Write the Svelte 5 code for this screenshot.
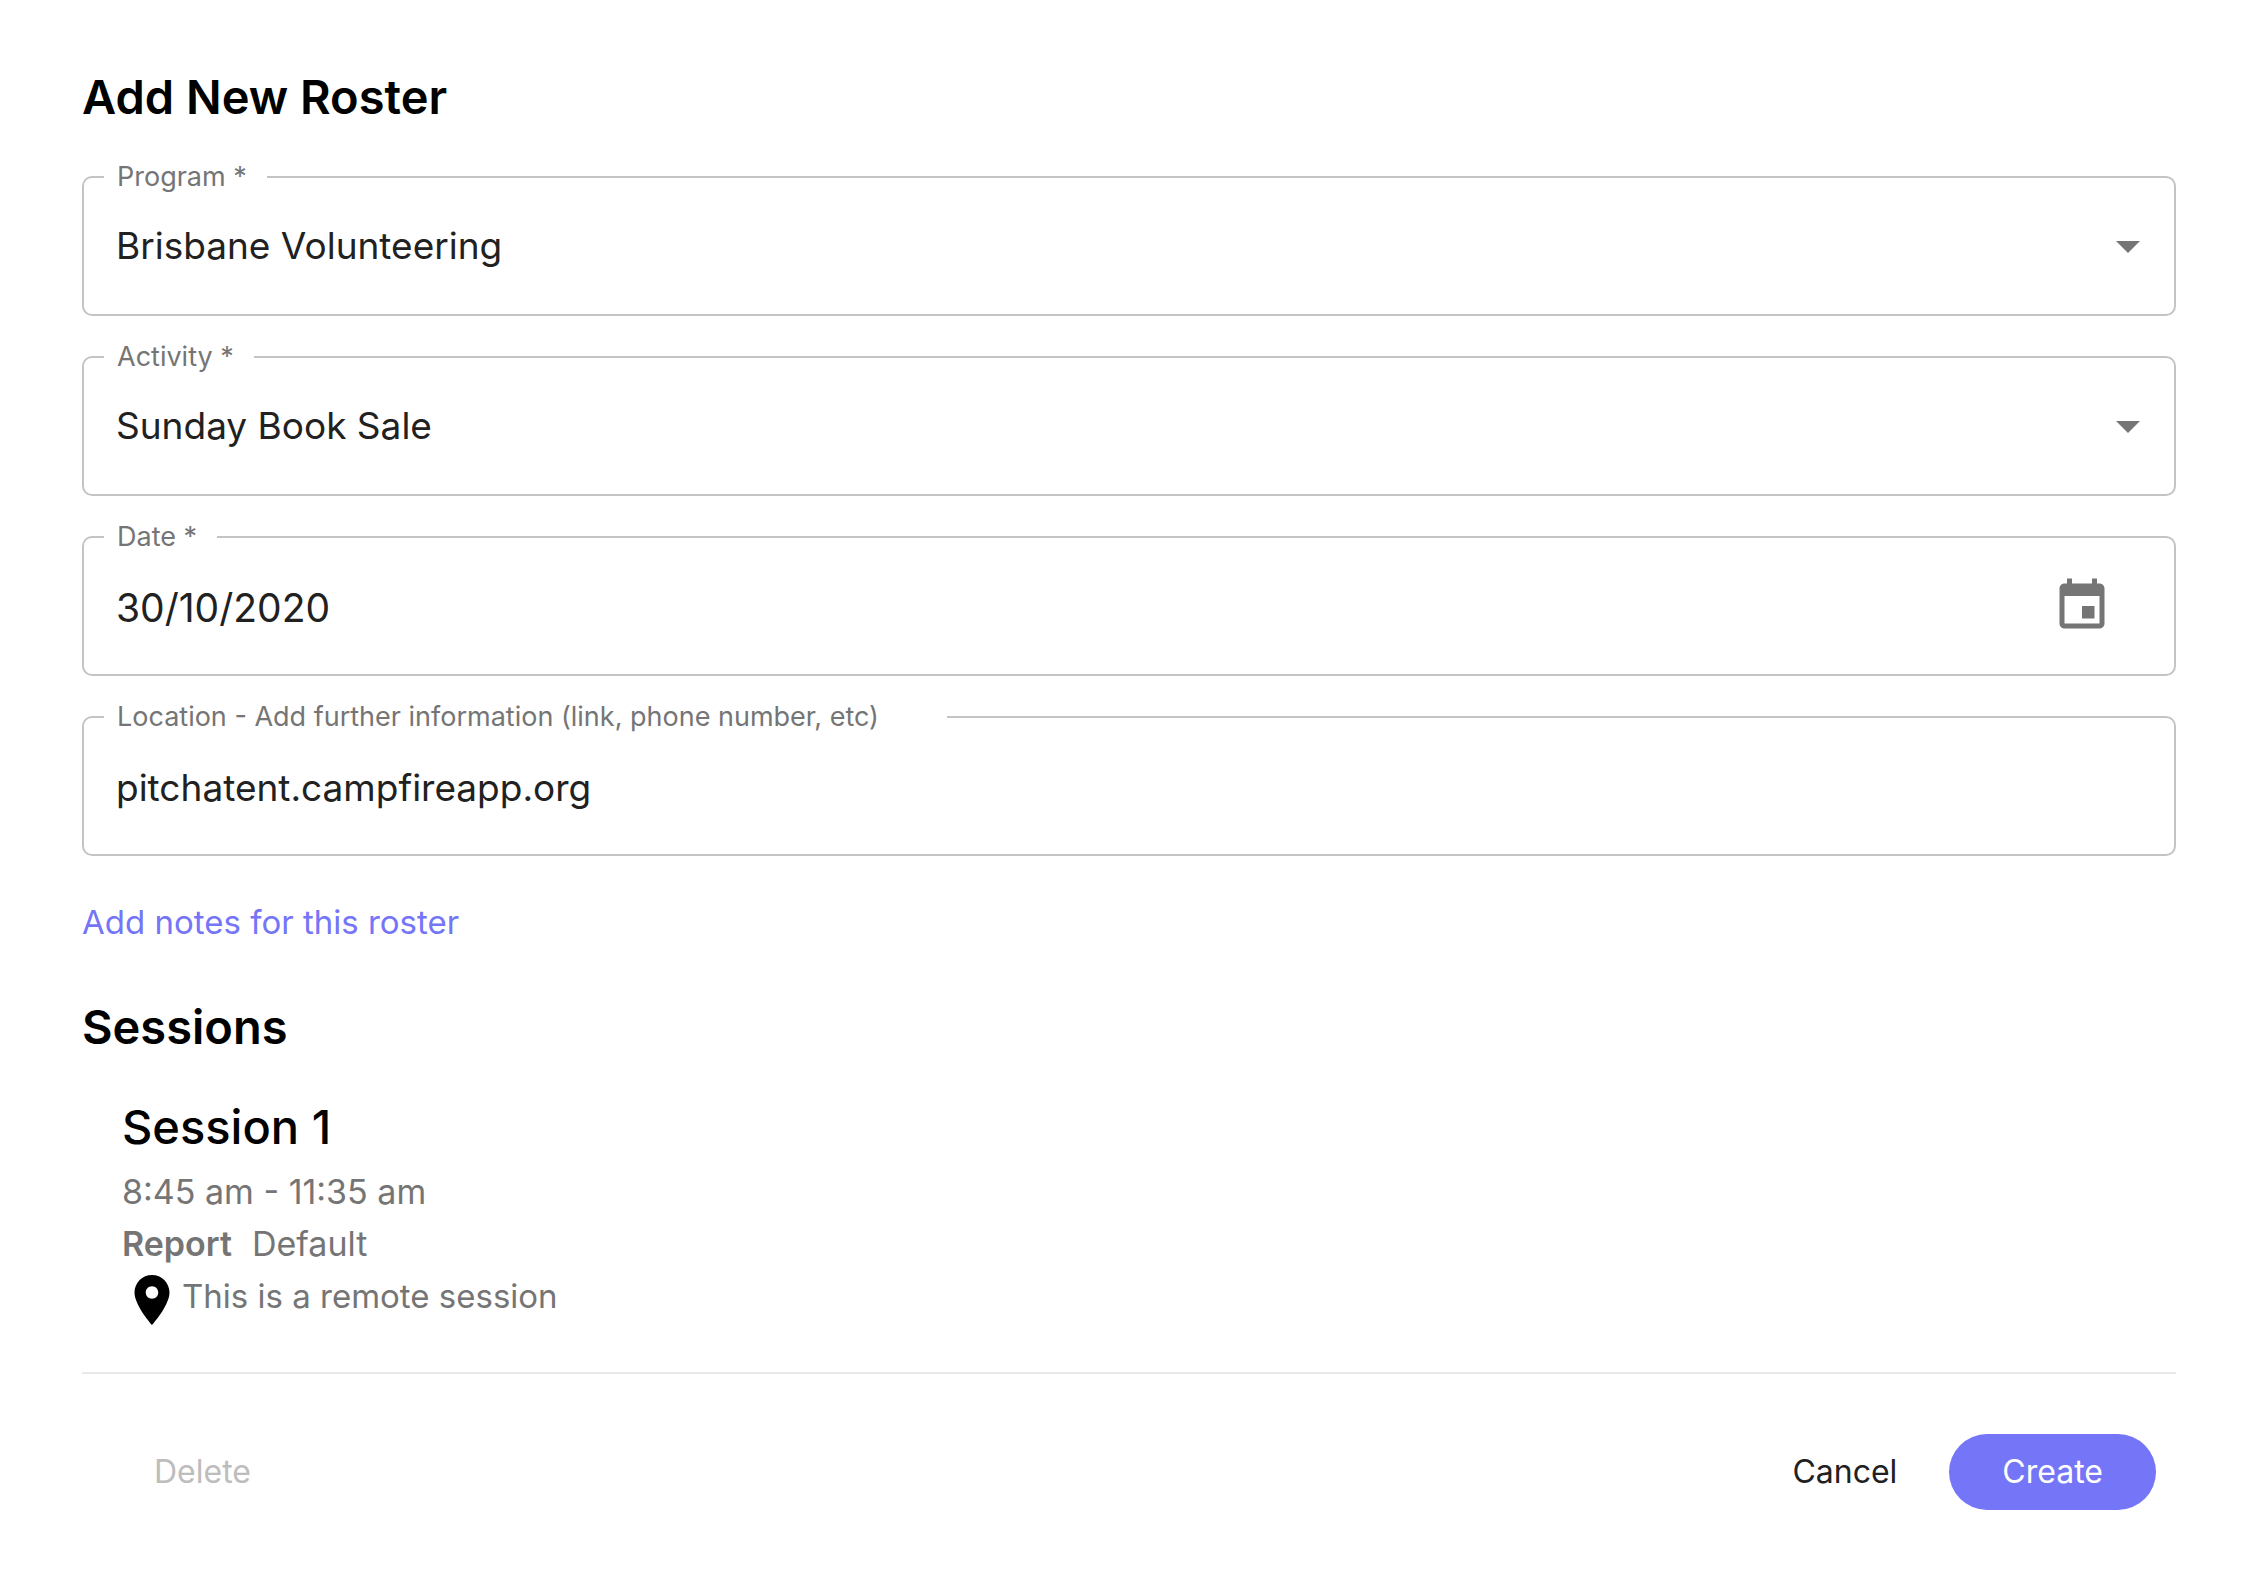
<script>
  let program = $state('Brisbane Volunteering');
  let activity = $state('Sunday Book Sale');
  let date = $state('30/10/2020');
  let location = $state('pitchatent.campfireapp.org');
</script>

<svelte:head>
  <title>Add New Roster</title>
</svelte:head>

<main>
  <form onsubmit={(e) => e.preventDefault()}>
    <h1>Add New Roster</h1>

    <div class="fields">
      <div class="field">
        <label for="program">Program *</label>
        <select id="program" bind:value={program} required>
          <option>Brisbane Volunteering</option>
        </select>
        <svg class="caret" viewBox="0 0 24 12" aria-hidden="true"><path d="M0 0h24L12 12z" /></svg>
      </div>

      <div class="field">
        <label for="activity">Activity *</label>
        <select id="activity" bind:value={activity} required>
          <option>Sunday Book Sale</option>
        </select>
        <svg class="caret" viewBox="0 0 24 12" aria-hidden="true"><path d="M0 0h24L12 12z" /></svg>
      </div>

      <div class="field typed">
        <label for="date">Date *</label>
        <input id="date" class="digits" type="text" bind:value={date} required />
        <button type="button" class="pick" aria-label="Choose date">
          <svg viewBox="0 0 24 24" aria-hidden="true">
            <path d="M17 12h-5v5h5v-5zM16 1v2H8V1H6v2H5c-1.11 0-1.99.9-1.99 2L3 19c0 1.1.89 2 2 2h14c1.1 0 2-.9 2-2V5c0-1.1-.9-2-2-2h-1V1h-2zm3 18H5V8h14v11z" />
          </svg>
        </button>
      </div>

      <div class="field typed">
        <label class="long" for="location">Location - Add further information (link, phone number, etc)</label>
        <input id="location" type="text" bind:value={location} />
      </div>
    </div>

    <a class="notes" href="#notes">Add notes for this roster</a>

    <h2>Sessions</h2>

    <section class="session">
      <h3>Session 1</h3>
      <p class="time">8:45 am - 11:35 am</p>
      <p class="report"><strong>Report</strong><span>Default</span></p>
      <p class="place">
        <svg viewBox="0 0 24 24" aria-hidden="true">
          <path d="M12 2C8.13 2 5 5.13 5 9c0 5.25 7 13 7 13s7-7.75 7-13c0-3.87-3.13-7-7-7zm0 9.5c-1.38 0-2.5-1.12-2.5-2.5s1.12-2.5 2.5-2.5 2.5 1.12 2.5 2.5-1.12 2.5-2.5 2.5z" />
        </svg>
        <span>This is a remote session</span>
      </p>
    </section>

    <footer>
      <button type="button" class="delete" disabled>Delete</button>
      <button type="button" class="cancel">Cancel</button>
      <button type="submit" class="create">Create</button>
    </footer>
  </form>
</main>

<style>
  :global(body) {
    background: #fff;
  }

  main {
    padding: 65px 92px 64px 82px;
    font-family: Inter, 'Liberation Sans', sans-serif;
    font-size: 33px;
    line-height: 52px;
    color: #757575;
  }

  form {
    display: flex;
    flex-direction: column;
  }

  h1,
  h2,
  h3,
  p {
    margin: 0;
  }

  h1,
  h2,
  h3 {
    font-size: 47px;
    line-height: 64px;
    font-weight: 600;
    color: #000;
  }

  .fields {
    display: flex;
    flex-direction: column;
    gap: 40px;
    margin-top: 47px;
  }

  .field {
    position: relative;
    display: flex;
    align-items: center;
    box-sizing: border-box;
    height: 140px;
    border: 2px solid #c4c4c4;
    border-radius: 10px;
  }

  label {
    position: absolute;
    top: -19px;
    left: 20px;
    padding: 0 20px 0 13px;
    background: #fff;
    font-size: 27px;
    line-height: 36px;
    white-space: nowrap;
  }

  label.long {
    padding-right: 68px;
  }

  select,
  input {
    flex: 1;
    min-width: 0;
    align-self: stretch;
    box-sizing: border-box;
    margin: 0;
    padding: 0 32px;
    border: 0;
    background: none;
    appearance: none;
    font: inherit;
    font-size: 37px;
    color: #212121;
    outline: none;
  }

  .typed {
    padding-top: 4px;
  }

  .digits {
    font-size: 39px;
  }

  .caret {
    position: absolute;
    top: 63px;
    right: 34px;
    width: 24px;
    height: 12px;
    fill: #757575;
    pointer-events: none;
  }

  button {
    margin: 0;
    padding: 0;
    border: 0;
    background: none;
    font: inherit;
    cursor: pointer;
  }

  .pick {
    margin: 0 62px 4px 0;
    height: 60px;
  }

  .pick svg,
  .place svg {
    display: block;
    width: 60px;
    height: 60px;
  }

  .pick svg {
    fill: #757575;
  }

  .notes {
    align-self: flex-start;
    margin-top: 40px;
    color: #7575f7;
    text-decoration: none;
  }

  h2 {
    margin-top: 47px;
  }

  .session {
    margin-top: 36px;
    padding: 0 40px 42px;
    border-bottom: 2px solid #e8e8e8;
  }

  h3 {
    font-weight: 500;
    margin-bottom: 7px;
  }

  .time,
  .report {
    font-size: 34px;
  }

  .report {
    display: flex;
    gap: 20px;
  }

  strong {
    font-weight: 600;
  }

  .place {
    display: flex;
  }

  .place svg {
    fill: #000;
  }

  footer {
    display: flex;
    align-items: center;
    padding: 60px 20px 0 72px;
    font-size: 32px;
  }

  .delete {
    margin-right: auto;
    color: #bdbdbd;
    cursor: default;
  }

  .cancel {
    margin-right: 52px;
    color: #212121;
  }

  .create {
    padding: 12px 53px;
    border-radius: 38px;
    background: #7575f7;
    color: #fff;
  }
</style>
